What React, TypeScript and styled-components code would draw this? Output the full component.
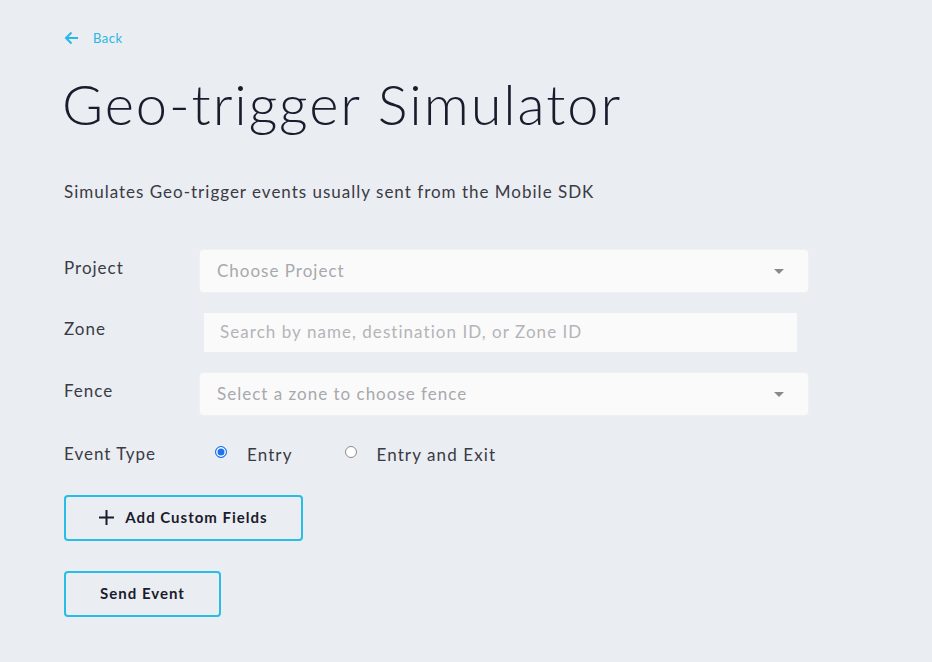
import * as React from 'react'
import styled, { createGlobalStyle } from 'styled-components'

const GlobalStyle = createGlobalStyle`
  html, body {
    margin: 0;
    padding: 0;
    background: #eaedf1;
  }
  body {
    font-family: Lato, "Open Sans", sans-serif;
    color: #1c1d2e;
  }
`

const Page = styled.main`
  padding: 28px 0 0 64px;
  min-height: 662px;
  box-sizing: border-box;
`

const BackLink = styled.a`
  display: inline-flex;
  align-items: center;
  gap: 14px;
  color: #2bb6e6;
  font-size: 13px;
  letter-spacing: 0.5px;
  text-decoration: none;
  height: 20px;
`

const Title = styled.h1`
  margin: 20px 0 0 -2px;
  font-size: 56px;
  font-weight: 300;
  letter-spacing: 1.9px;
  color: #1a1b2d;
  line-height: 72px;
`

const Subtitle = styled.p`
  margin: 40px 0 0;
  font-size: 17px;
  letter-spacing: 1px;
  color: #3a3b45;
  line-height: 24px;
`

const Form = styled.form`
  margin-top: 46px;
  display: flex;
  flex-direction: column;
  gap: 21px;
  width: 744px;
`

const Row = styled.div`
  display: grid;
  grid-template-columns: 136px 1fr;
  align-items: center;
`

const Label = styled.span<{ $lift?: number }>`
  font-size: 17px;
  letter-spacing: 1px;
  color: #3a3b45;
  margin-top: ${p => -(p.$lift ?? 8)}px;
`

const SelectBox = styled.div`
  height: 42px;
  background: #fafafa;
  border-radius: 4px;
  display: flex;
  align-items: center;
  justify-content: space-between;
  padding: 0 24px 2px 17px;
  box-sizing: border-box;
  box-shadow: 0 0 0 1px #eef0f2;
`

const Placeholder = styled.span`
  font-size: 17px;
  letter-spacing: 1px;
  color: #a8a8ad;
`

const Caret = styled.span`
  width: 0;
  height: 0;
  margin-top: 2px;
  border-left: 5px solid transparent;
  border-right: 5px solid transparent;
  border-top: 5px solid #8a8a8a;
`

const SearchInput = styled.input`
  height: 39px;
  box-sizing: border-box;
  margin: 0 11px 0 4px;
  border: none;
  background: #fafafa;
  padding: 0 16px 2px;
  font-family: inherit;
  font-size: 17px;
  letter-spacing: 1.05px;
  color: #333;
  outline: none;
  &::placeholder {
    color: #b4b4b8;
  }
`

const RadioGroup = styled.div`
  display: flex;
  align-items: center;
  height: 36px;
  padding-left: 15px;
`

const RadioOption = styled.label`
  display: inline-flex;
  align-items: center;
  gap: 20px;
  font-size: 17px;
  letter-spacing: 1.1px;
  color: #3a3b45;
  margin-right: 52px;
`

const RadioDot = styled.span<{ $checked?: boolean }>`
  width: 12px;
  height: 12px;
  border-radius: 50%;
  box-sizing: border-box;
  margin-top: -4px;
  background: ${p => (p.$checked ? '#1a73f0' : '#ffffff')};
  border: 1px solid ${p => (p.$checked ? '#1a73f0' : '#8d8d8d')};
  box-shadow: ${p => (p.$checked ? 'inset 0 0 0 1.5px #ffffff' : 'none')};
`

const OutlineButton = styled.button<{ $width: number }>`
  width: ${p => p.$width}px;
  height: 46px;
  border: 2px solid #27bde6;
  border-radius: 4px;
  background: transparent;
  display: inline-flex;
  align-items: center;
  justify-content: center;
  gap: 11px;
  padding-bottom: 3px;
  font-family: Lato, sans-serif;
  font-size: 15px;
  font-weight: 700;
  letter-spacing: 1px;
  color: #1a1b2d;
  cursor: pointer;
`

const ButtonRow = styled.div`
  margin-top: 23px;
`

const SendRow = styled.div`
  margin-top: 30px;
`

const ArrowLeft = () => (
  <svg width="15" height="14" viewBox="0 0 15 14" fill="none" stroke="#2bb6e6" strokeWidth="2">
    <path d="M14 7H2M7.5 1.5L2 7l5.5 5.5" />
  </svg>
)

const PlusIcon = () => (
  <svg width="15" height="15" viewBox="0 0 15 15" stroke="#1a1b2d" strokeWidth="2">
    <path d="M7.5 0v15M0 7.5h15" />
  </svg>
)

export default function App() {
  return (
    <>
      <GlobalStyle />
      <Page>
        <BackLink href="#">
          <ArrowLeft />
          Back
        </BackLink>
        <Title>Geo-trigger Simulator</Title>
        <Subtitle>Simulates Geo-trigger events usually sent from the Mobile SDK</Subtitle>
        <Form onSubmit={e => e.preventDefault()}>
          <Row>
            <Label>Project</Label>
            <SelectBox>
              <Placeholder>Choose Project</Placeholder>
              <Caret />
            </SelectBox>
          </Row>
          <Row>
            <Label>Zone</Label>
            <SearchInput placeholder="Search by name, destination ID, or Zone ID" />
          </Row>
          <Row>
            <Label>Fence</Label>
            <SelectBox>
              <Placeholder>Select a zone to choose fence</Placeholder>
              <Caret />
            </SelectBox>
          </Row>
          <Row>
            <Label $lift={2}>Event Type</Label>
            <RadioGroup>
              <RadioOption>
                <RadioDot $checked />
                Entry
              </RadioOption>
              <RadioOption>
                <RadioDot />
                Entry and Exit
              </RadioOption>
            </RadioGroup>
          </Row>
        </Form>
        <ButtonRow>
          <OutlineButton $width={239} type="button">
            <PlusIcon />
            Add Custom Fields
          </OutlineButton>
        </ButtonRow>
        <SendRow>
          <OutlineButton $width={157} type="button">Send Event</OutlineButton>
        </SendRow>
      </Page>
    </>
  )
}
